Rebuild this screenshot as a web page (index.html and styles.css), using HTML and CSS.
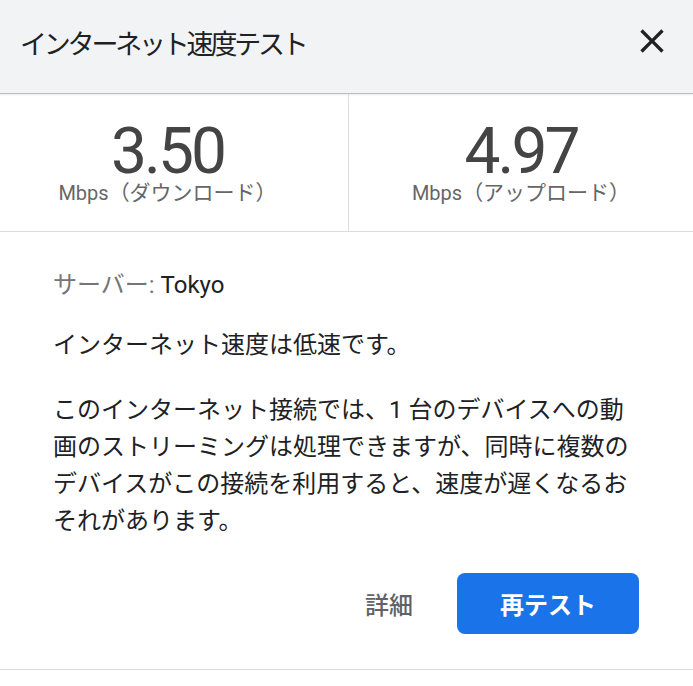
FILE: index.html
```html
<!DOCTYPE html>
<html lang="ja">
<head>
<meta charset="utf-8">
<title>インターネット速度テスト</title>
<link rel="stylesheet" href="styles.css">
</head>
<body>
<div class="dialog">
  <header class="header">
    <h1 class="title">インターネット速度テスト</h1>
    <button class="close" aria-label="閉じる">
      <svg viewBox="0 0 24 24" width="40" height="40"><path d="M19 6.41 17.59 5 12 10.59 6.41 5 5 6.41 10.59 12 5 17.59 6.41 19 12 13.41 17.59 19 19 17.59 13.41 12z" fill="#202124"/></svg>
    </button>
  </header>
  <section class="stats">
    <div class="stat stat-down">
      <div class="value">3.50</div>
      <div class="unit">Mbps<span class="unit-jp">（ダウンロード）</span></div>
    </div>
    <div class="stat stat-up">
      <div class="value">4.97</div>
      <div class="unit">Mbps<span class="unit-jp">（アップロード）</span></div>
    </div>
  </section>
  <section class="content">
    <p class="server"><span class="server-label">サーバー:</span> Tokyo</p>
    <p class="status">インターネット速度は低速です。</p>
    <p class="desc">このインターネット接続では、1 台のデバイスへの動画のストリーミングは処理できますが、同時に複数のデバイスがこの接続を利用すると、速度が遅くなるおそれがあります。</p>
    <div class="actions">
      <button class="btn-text">詳細</button>
      <button class="btn-primary">再テスト</button>
    </div>
  </section>
</div>
</body>
</html>
```

FILE: styles.css
```css
* { box-sizing: border-box; }
html, body {
  margin: 0;
  padding: 0;
  background: #ffffff;
}
body {
  font-family: Roboto, "Noto Sans CJK JP", sans-serif;
  color: #202124;
}
.dialog {
  width: 693px;
}
.header {
  height: 94px;
  background: #f1f3f4;
  border-bottom: 1px solid #bdbdbd;
  box-shadow: 0 1px 2px rgba(0, 0, 0, 0.08);
  display: flex;
  align-items: center;
  justify-content: space-between;
  padding: 0 21px 0 20px;
}
.title {
  margin: 0 0 3px 0;
  font-size: 27px;
  font-weight: 400;
  line-height: 34px;
  letter-spacing: -3.2px;
  color: #202124;
}
.close {
  border: 0;
  background: transparent;
  padding: 0;
  width: 40px;
  height: 40px;
  margin-bottom: 11px;
  display: flex;
}
.stats {
  display: grid;
  grid-template-columns: 349px 1fr;
  height: 138px;
  border-bottom: 1px solid #dadce0;
}
.stat {
  display: flex;
  flex-direction: column;
  align-items: center;
  padding-top: 29px;
}
.stat-down {
  border-right: 1px solid #dadce0;
  padding-right: 13px;
}
.value {
  font-size: 64px;
  line-height: 58px;
  letter-spacing: -3px;
  color: #444444;
}
.unit {
  font-size: 20px;
  line-height: 24px;
  color: #666666;
}
.unit-jp {
  font-size: 21px;
}
.content {
  padding: 35px 54px 35px 53px;
  border-bottom: 1px solid #dadce0;
}
.content p {
  margin: 0;
  font-size: 24px;
  line-height: 36.7px;
}
.server-label {
  color: #757575;
}
.status {
  margin-top: 23px !important;
}
.desc {
  margin-top: 29px !important;
}
.actions {
  display: flex;
  justify-content: flex-end;
  align-items: center;
  gap: 38px;
  margin-top: 34px;
}
.btn-text {
  border: 0;
  background: transparent;
  font-family: Roboto, "Noto Sans CJK JP", sans-serif;
  font-size: 24px;
  font-weight: 500;
  color: #5f6368;
  padding: 0 6px;
}
.btn-primary {
  width: 182px;
  height: 61px;
  border: 0;
  border-radius: 8px;
  background: #1a73e8;
  color: #ffffff;
  font-family: Roboto, "Noto Sans CJK JP", sans-serif;
  font-size: 24px;
  font-weight: 700;
}
```
